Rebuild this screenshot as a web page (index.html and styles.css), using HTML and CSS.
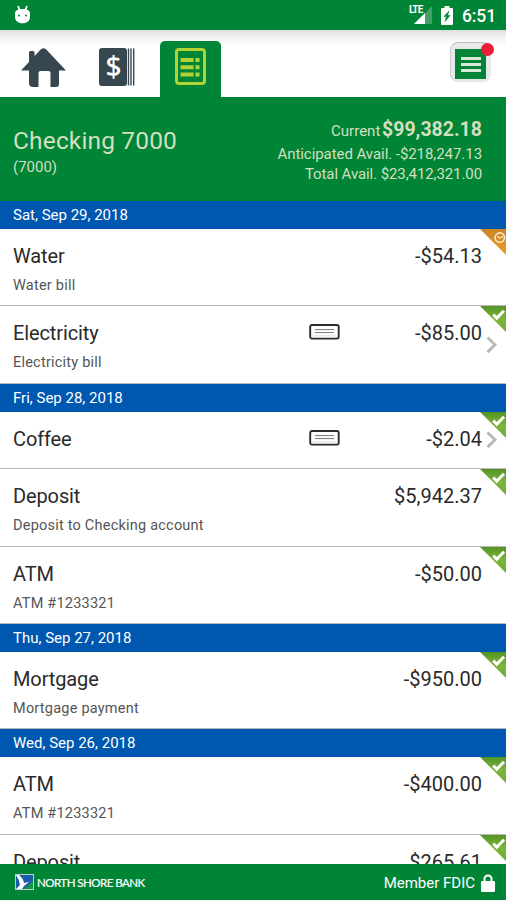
FILE: index.html
```html
<!DOCTYPE html>
<html lang="en">
<head>
  <meta charset="UTF-8">
  <meta name="viewport" content="width=device-width, initial-scale=1.0">
  <title>Checking 7000</title>
  <link rel="stylesheet" href="styles.css">
</head>
<body>
<svg class="defs" width="0" height="0">
  <defs>
    <linearGradient id="green" x1="0" y1="0" x2="0" y2="1">
      <stop offset="0" stop-color="#549326"/>
      <stop offset="0.5" stop-color="#7db53a"/>
      <stop offset="1" stop-color="#73a737"/>
    </linearGradient>
    <linearGradient id="orange" x1="0" y1="0" x2="0" y2="1">
      <stop offset="0" stop-color="#c98526"/>
      <stop offset="1" stop-color="#ed9b28"/>
    </linearGradient>
    <symbol id="cleared" viewBox="0 0 26 26">
      <path d="M0 0h26v26z" fill="url(#green)"/>
      <path d="M13.2 8.6l3.6 3.5 7.2-7.3" fill="none" stroke="#fff" stroke-width="2.9"/>
    </symbol>
    <symbol id="pending" viewBox="0 0 26 26">
      <path d="M0 0h26v26z" fill="url(#orange)"/>
      <circle cx="19.8" cy="8.6" r="4.7" fill="none" stroke="#f8e5cc" stroke-width="1.6"/>
      <path d="M17.2 7l2.6 2 3-1.5" fill="none" stroke="#f8e5cc" stroke-width="1.3"/>
    </symbol>
    <symbol id="check" viewBox="0 0 31 16">
      <rect x="1.2" y="1" width="28.5" height="13.6" rx="1.8" fill="#fff" stroke="#2b2b2b" stroke-width="1.9"/>
      <path d="M6 5.6h19M6 8.6h19" stroke="#777" stroke-width="1"/>
      <path d="M3 11.9h24" stroke="#ddd" stroke-width="1"/>
    </symbol>
    <symbol id="arrow" viewBox="0 0 12 18">
      <path d="M1.5 1.5l7.5 7.3-7.5 7.3" fill="none" stroke="#b9b9b9" stroke-width="2.9"/>
    </symbol>
  </defs>
</svg>

<div class="app">
  <div class="status-bar">
    <svg width="18" height="20" viewBox="0 0 18 20">
      <path d="M4 1l2 5M13 1l-2 5" stroke="#fff" stroke-width="1.8"/>
      <path d="M1 8.5C1 5.5 3.5 4 8.5 4S16 5.5 16 8.5V12c0 3.8-3 6.3-7.5 6.3S1 15.8 1 12z" fill="#fff"/>
      <circle cx="5" cy="10.5" r="1" fill="#008435"/><circle cx="12" cy="10.5" r="1" fill="#008435"/>
    </svg>
    <div class="status-right">
      <div class="signal">
        <svg width="18" height="18" viewBox="0 0 18 18">
          <path d="M0 18L18 0v18z" fill="#45a066"/>
          <path d="M0 18L11 7v11z" fill="#fff"/>
        </svg>
        <span class="lte">LTE</span>
      </div>
      <svg class="battery" width="12" height="19" viewBox="0 0 12 19">
        <path d="M3.5 0h5v2H11a1 1 0 0 1 1 1v15a1 1 0 0 1-1 1H1a1 1 0 0 1-1-1V3a1 1 0 0 1 1-1h2.5z" fill="#fff"/>
        <path d="M8 5L3 10.5h2.5L4 15.5l5-6H6.500z" fill="#008435" stroke="#008435" stroke-width=".6"/>
      </svg>
      <span class="clock">6:51</span>
    </div>
  </div>

  <div class="tabs">
    <div class="tab tab-home">
      <svg width="46" height="40" viewBox="0 0 46 40">
        <path d="M8 4.5Q8 3 9.5 3H12q1.5 0 1.5 1.5V8L20 1.2Q22.5-.8 25 1.2L45 22.5h-7V36q0 3-3 3h-5.5V25q0-2-2-2h-8q-2 0-2 2v14H12q-4 0-4-4V22.5H0L8 14z" fill="#37474f"/>
      </svg>
    </div>
    <div class="tab tab-pay">
      <svg width="36" height="38" viewBox="0 0 36 38">
        <rect x="0" y="0" width="28" height="38" rx="3" fill="#37474f"/>
        <path d="M29.5.5v37M32 .5v37M34.7.5v37" stroke="#37474f" stroke-width="1.4"/>
        <text class="dollar" x="14.500" y="28.5" text-anchor="middle">$</text>
      </svg>
    </div>
    <div class="tab tab-active">
      <svg width="31" height="37" viewBox="0 0 31 37">
        <rect x="1.5" y="1.5" width="28" height="34" rx="2.5" fill="none" stroke="#b2d235" stroke-width="3"/>
        <path d="M5.5 12h13M5.5 19.2h13M5.5 26.5h13M20.5 12h4M20.5 19.2h4M20.5 26.5h4" stroke="#b2d235" stroke-width="4"/>
      </svg>
    </div>
    <div class="menu">
      <div class="menu-icon"><i></i><i></i><i></i></div>
      <span class="badge"></span>
    </div>
  </div>

  <div class="account">
    <div class="account-name">
      <h1>Checking 7000</h1>
      <p>(7000)</p>
    </div>
    <div class="balances">
      <p class="current"><span>Current</span> <b>$99,382.18</b></p>
      <p class="anticipated">Anticipated Avail. -$218,247.13</p>
      <p class="total">Total Avail. $23,412,321.00</p>
    </div>
  </div>

  <div class="list">
    <div class="date">Sat, Sep 29, 2018</div>
    <div class="row">
      <div class="line"><span class="name">Water</span><span class="amount">-$54.13</span></div>
      <p>Water bill</p>
      <svg class="corner"><use href="#pending"/></svg>
    </div>
    <div class="row">
      <div class="line"><span class="name">Electricity</span><svg class="check"><use href="#check"/></svg><span class="amount">-$85.00</span></div>
      <p>Electricity bill</p>
      <svg class="corner"><use href="#cleared"/></svg>
      <svg class="arrow"><use href="#arrow"/></svg>
    </div>
    <div class="date">Fri, Sep 28, 2018</div>
    <div class="row short">
      <div class="line"><span class="name">Coffee</span><svg class="check"><use href="#check"/></svg><span class="amount">-$2.04</span></div>
      <svg class="corner"><use href="#cleared"/></svg>
      <svg class="arrow"><use href="#arrow"/></svg>
    </div>
    <div class="row">
      <div class="line"><span class="name">Deposit</span><span class="amount">$5,942.37</span></div>
      <p>Deposit to Checking account</p>
      <svg class="corner"><use href="#cleared"/></svg>
    </div>
    <div class="row">
      <div class="line"><span class="name">ATM</span><span class="amount">-$50.00</span></div>
      <p>ATM #1233321</p>
      <svg class="corner"><use href="#cleared"/></svg>
    </div>
    <div class="date">Thu, Sep 27, 2018</div>
    <div class="row">
      <div class="line"><span class="name">Mortgage</span><span class="amount">-$950.00</span></div>
      <p>Mortgage payment</p>
      <svg class="corner"><use href="#cleared"/></svg>
    </div>
    <div class="date">Wed, Sep 26, 2018</div>
    <div class="row">
      <div class="line"><span class="name">ATM</span><span class="amount">-$400.00</span></div>
      <p>ATM #1233321</p>
      <svg class="corner"><use href="#cleared"/></svg>
    </div>
    <div class="row">
      <div class="line"><span class="name">Deposit</span><span class="amount">$265.61</span></div>
      <svg class="corner"><use href="#cleared"/></svg>
    </div>
  </div>

  <div class="footer">
    <div class="brand">
      <svg width="19" height="16" viewBox="0 0 19 16">
        <rect x=".5" y=".5" width="18" height="15" fill="#1c5da8" stroke="#b7d3cb"/>
        <path d="M9 15l9-8v8z" fill="#16964a"/>
        <path d="M1 1h3q4 3 5 8l5-1-5 4-2 3H1l4-4Q4 5 1 1z" fill="#fff"/>
      </svg>
      <span>NORTH SHORE BANK</span>
    </div>
    <div class="fdic">
      <span>Member FDIC</span>
      <svg width="14" height="18" viewBox="0 0 14 18">
        <path d="M3.5 8V5a3.5 3.5 0 0 1 7 0v3" fill="none" stroke="#fff" stroke-width="2"/>
        <rect x="0" y="7" width="14" height="11" rx="1.2" fill="#fff"/>
      </svg>
    </div>
  </div>
</div>
</body>
</html>
```
FILE: styles.css
```css
:root {
  --green: #008435;
  --blue: #0057b0;
  --cream: #d3dfbf;
}

* {
  margin: 0;
  padding: 0;
  box-sizing: border-box;
}

body {
  font-family: Roboto, "Liberation Sans", sans-serif;
  background: #fff;
  color: #2a2a2a;
}

svg {
  display: block;
}

.defs {
  position: absolute;
}

.app {
  width: 506px;
  height: 900px;
  display: flex;
  flex-direction: column;
  overflow: hidden;
}

.status-bar {
  height: 30px;
  flex: none;
  background: var(--green);
  display: flex;
  justify-content: space-between;
  align-items: center;
  padding: 0 10px 0 14px;
}

.status-right {
  display: flex;
  align-items: center;
}

.signal {
  position: relative;
  margin-right: 9px;
}

.lte {
  position: absolute;
  left: -5px;
  top: -1px;
  font-size: 10px;
  line-height: 9px;
  font-weight: 700;
  letter-spacing: -0.9px;
  color: #fff;
  background: var(--green);
}

.battery {
  margin-right: 9px;
}

.clock {
  color: #fff;
  font-size: 17.5px;
  font-weight: 500;
  letter-spacing: -0.1px;
  line-height: 20px;
  padding-top: 2px;
}

.tabs {
  height: 68px;
  flex: none;
  display: flex;
  align-items: flex-start;
  background: linear-gradient(#dedede, #f3f3f3 7px, #fff 16px);
  border-bottom: 1px solid var(--green);
}

.tab-home {
  margin: 18px 0 0 21px;
}

.tab-pay {
  margin: 18px 0 0 32px;
}

.dollar {
  font-family: "Noto Sans", sans-serif;
  font-size: 28px;
  font-weight: 500;
  fill: #fff;
}

.tab-active {
  width: 61px;
  height: 58px;
  margin: 11px 0 0 25px;
  padding: 7px 0 0 15px;
  background: var(--green);
  border-radius: 5px 5px 0 0;
}

.menu {
  position: relative;
  width: 41px;
  height: 40px;
  margin: 12px 15px 0 auto;
  padding: 6px 4px;
  border-radius: 8px;
  background: #e6e9e8;
  border-top: 1px solid #bbb;
  border-left: 1px solid #ccc;
}

.menu-icon {
  width: 31px;
  height: 30px;
  background: var(--green);
  display: flex;
  flex-direction: column;
  align-items: center;
  justify-content: center;
  gap: 3px;
}

.menu-icon i {
  width: 20px;
  height: 3px;
  background: #dce9d9;
}

.badge {
  position: absolute;
  right: -3px;
  top: 0;
  width: 13px;
  height: 13px;
  border-radius: 50%;
  background: #ea1c36;
}

.account {
  height: 103px;
  flex: none;
  background: var(--green);
  color: var(--cream);
  display: flex;
  justify-content: space-between;
  padding: 0 24px 0 13px;
}

.account-name h1 {
  margin-top: 27px;
  font-size: 24.5px;
  line-height: 31px;
  font-weight: 400;
  letter-spacing: 0.15px;
}

.account-name p {
  font-size: 15px;
  line-height: 22px;
}

.balances {
  padding-top: 19px;
  text-align: right;
  font-size: 15px;
  line-height: 20px;
}

.current {
  line-height: 25px;
}

.current b {
  font-size: 19.5px;
  margin-left: -2px;
}

.anticipated {
  letter-spacing: -0.06px;
}

.total {
  letter-spacing: -0.09px;
}

.list {
  flex: 1;
  overflow: hidden;
}

.date {
  height: 28px;
  padding-left: 13px;
  background: var(--blue);
  color: #fff;
  font-size: 15px;
  line-height: 29px;
}

.row {
  position: relative;
  height: 77.4px;
  padding: 14px 24px 0 13px;
  border-bottom: 1px solid #b9b9b9;
}

.row.short {
  height: 57.4px;
}

.line {
  display: flex;
  align-items: center;
  height: 26px;
  font-size: 20px;
}

.name {
  letter-spacing: -0.12px;
}

.amount {
  margin-left: auto;
}

.check {
  position: absolute;
  left: 309px;
  top: 18px;
  width: 31px;
  height: 16px;
}

.row p {
  margin-top: 7px;
  font-size: 14.5px;
  line-height: 20px;
  color: #555;
  letter-spacing: 0.22px;
}

.corner {
  position: absolute;
  right: 0;
  top: 0;
  width: 26px;
  height: 26px;
}

.arrow {
  position: absolute;
  left: 486px;
  top: 30px;
  width: 12px;
  height: 18px;
}

.short .arrow {
  top: 19px;
}

.footer {
  height: 36px;
  flex: none;
  background: var(--green);
  color: #fff;
  display: flex;
  justify-content: space-between;
  align-items: center;
  padding: 0 11px 0 15px;
}

.brand {
  display: flex;
  align-items: center;
  gap: 3px;
  font-family: Lato, sans-serif;
  font-size: 11.5px;
  letter-spacing: -0.52px;
  -webkit-text-stroke: 0.2px #fff;
}

.fdic {
  display: flex;
  align-items: center;
  gap: 6px;
  padding-top: 1px;
  font-size: 15px;
}
```
